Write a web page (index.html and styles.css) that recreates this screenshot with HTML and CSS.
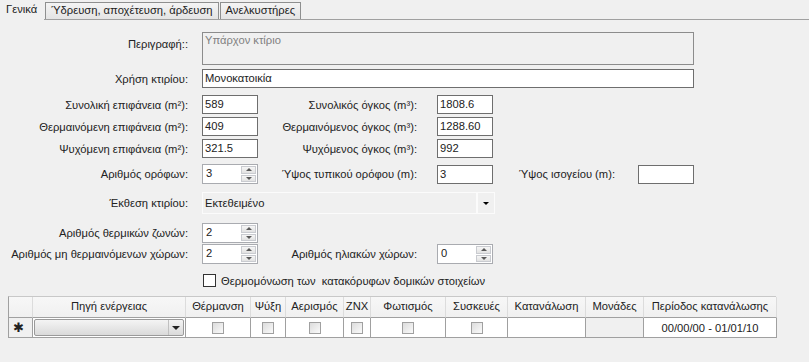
FILE: index.html
```html
<!DOCTYPE html>
<html lang="el">
<head>
  <meta charset="UTF-8">
  <title>Κτίριο - Γενικά</title>
  <link rel="stylesheet" href="styles.css">
</head>
<body>
  <div class="tabs">
    <div class="tab active">Γενικά</div>
    <div class="tab">Ύδρευση, αποχέτευση, άρδευση</div>
    <div class="tab">Ανελκυστήρες</div>
  </div>

  <div class="form">
    <div class="row row-desc">
      <label class="lbl c1 top">Περιγραφή::</label>
      <div class="memo">Υπάρχον κτίριο</div>
    </div>

    <div class="row row-use">
      <label class="lbl c1">Χρήση κτιρίου:</label>
      <div class="box wide">Μονοκατοικία</div>
    </div>

    <div class="row row-num first">
      <label class="lbl c1">Συνολική επιφάνεια (m²):</label>
      <div class="box">589</div>
      <label class="lbl c2">Συνολικός όγκος (m³):</label>
      <div class="box">1808.6</div>
    </div>
    <div class="row row-num">
      <label class="lbl c1">Θερμαινόμενη επιφάνεια (m²):</label>
      <div class="box">409</div>
      <label class="lbl c2">Θερμαινόμενος όγκος (m³):</label>
      <div class="box">1288.60</div>
    </div>
    <div class="row row-num">
      <label class="lbl c1">Ψυχόμενη επιφάνεια (m²):</label>
      <div class="box">321.5</div>
      <label class="lbl c2">Ψυχόμενος όγκος (m³):</label>
      <div class="box">992</div>
    </div>

    <div class="row row-floors">
      <label class="lbl c1">Αριθμός ορόφων:</label>
      <div class="spin"><span class="spin-val">3</span><span class="spin-btns"><i class="up"></i><i class="down"></i></span></div>
      <label class="lbl c2">Ύψος τυπικού ορόφου (m):</label>
      <div class="box">3</div>
      <label class="lbl c3">Ύψος ισογείου (m):</label>
      <div class="box"></div>
    </div>

    <div class="row row-combo">
      <label class="lbl c1">Έκθεση κτιρίου:</label>
      <div class="combo">
        <span class="combo-val">Εκτεθειμένο</span>
        <span class="combo-arrow"></span>
      </div>
    </div>

    <div class="row row-zones">
      <label class="lbl c1">Αριθμός θερμικών ζωνών:</label>
      <div class="spin"><span class="spin-val">2</span><span class="spin-btns"><i class="up"></i><i class="down"></i></span></div>
    </div>
    <div class="row row-unheated">
      <label class="lbl c1">Αριθμός μη θερμαινόμενων χώρων:</label>
      <div class="spin"><span class="spin-val">2</span><span class="spin-btns"><i class="up"></i><i class="down"></i></span></div>
      <label class="lbl c2">Αριθμός ηλιακών χώρων:</label>
      <div class="spin"><span class="spin-val">0</span><span class="spin-btns"><i class="up"></i><i class="down"></i></span></div>
    </div>

    <div class="row row-check">
      <span class="check"></span>
      <span class="check-text">Θερμομόνωση των &nbsp;κατακόρυφων δομικών στοιχείων</span>
    </div>

    <div class="grid">
      <div class="hd rh"></div>
      <div class="hd">Πηγή ενέργειας</div>
      <div class="hd">Θέρμανση</div>
      <div class="hd">Ψύξη</div>
      <div class="hd">Αερισμός</div>
      <div class="hd">ZNX</div>
      <div class="hd">Φωτισμός</div>
      <div class="hd">Συσκευές</div>
      <div class="hd">Κατανάλωση</div>
      <div class="hd">Μονάδες</div>
      <div class="hd">Περίοδος κατανάλωσης</div>

      <div class="cell rh star">✱</div>
      <div class="cell"><div class="cell-combo"><span class="cell-arrow"></span></div></div>
      <div class="cell"><span class="cb"></span></div>
      <div class="cell"><span class="cb"></span></div>
      <div class="cell"><span class="cb"></span></div>
      <div class="cell"><span class="cb"></span></div>
      <div class="cell"><span class="cb"></span></div>
      <div class="cell"><span class="cb"></span></div>
      <div class="cell"></div>
      <div class="cell grey"></div>
      <div class="cell">00/00/00 - 01/01/10</div>
    </div>
  </div>
</body>
</html>
```

FILE: styles.css
```css
* {
  margin: 0;
  padding: 0;
  box-sizing: border-box;
}

body {
  font-family: "Liberation Sans", Arial, sans-serif;
  font-size: 11.2px;
  color: #222;
  background-color: #f0f0f0;
  width: 809px;
  height: 362px;
  overflow: hidden;
}

/* tab strip */
.tabs {
  display: flex;
  align-items: flex-end;
  height: 20px;
  border-bottom: 1px solid #a0a0a0;
}

.tab {
  height: 17px;
  line-height: 15px;
  padding: 0 5px;
  margin-left: 1px;
  border: 1px solid #8e8f8f;
  border-bottom: none;
  background: linear-gradient(#f4f4f4, #e4e4e4);
}

.tab.active {
  width: 44px;
  height: 20px;
  line-height: 18px;
  margin: 0 0 -1px 0;
  padding-left: 6px;
  border: none;
  background: #f0f0f0;
}

/* form rows */
.form {
  padding-top: 12px;
}

.row {
  display: flex;
  align-items: center;
}

.row-desc { height: 33px; align-items: flex-start; }
.row-use { height: 19px; margin-top: 4px; }
.row-num { height: 19px; margin-top: 3px; }
.row-num.first { margin-top: 7px; }
.row-floors { height: 20px; margin-top: 6px; }
.row-combo { height: 22px; margin-top: 8px; }
.row-zones { height: 20px; margin-top: 9px; }
.row-unheated { height: 20px; margin-top: 1px; }
.row-check { height: 13px; margin-top: 10px; padding-left: 203px; }

.lbl {
  text-align: right;
  white-space: nowrap;
}

.lbl.c1 { width: 188px; margin-right: 14px; }
.lbl.c2 { width: 159px; margin-right: 20px; }
.lbl.c3 { width: 122px; margin-right: 23px; }
.lbl.top { padding-top: 6px; }

.memo {
  width: 492px;
  height: 33px;
  border: 1px solid #8c8c8c;
  padding: 1px 2px;
  color: #808080;
}

.box {
  width: 56px;
  height: 19px;
  border: 1px solid #6e6e6e;
  background: #fff;
  padding: 0 2px;
  line-height: 16px;
}

.box.wide {
  width: 492px;
}

/* numeric up/down */
.spin {
  width: 56px;
  height: 20px;
  border: 1px solid #a9abb0;
  background: #fff;
  display: flex;
  justify-content: space-between;
  padding: 1px;
}

.spin-val {
  padding-left: 2px;
  line-height: 15px;
}

.spin-btns {
  width: 15px;
  display: flex;
  flex-direction: column;
  gap: 1px;
}

.spin-btns i {
  flex: 1;
  border: 1px solid #c9cbd0;
  background: linear-gradient(#f6f6f6, #e2e2e2);
  display: flex;
  justify-content: center;
  align-items: center;
}

.spin-btns i::after {
  content: "";
  border-left: 3px solid transparent;
  border-right: 3px solid transparent;
}

.spin-btns .up::after { border-bottom: 3px solid #5a5a5a; }
.spin-btns .down::after { border-top: 3px solid #5a5a5a; }

/* flat combo */
.combo {
  width: 293px;
  height: 22px;
  border: 1px solid #fbfbfb;
  display: flex;
  align-items: center;
}

.combo-val {
  flex: 1;
  padding-left: 2px;
}

.combo-arrow {
  width: 18px;
  height: 20px;
  border-left: 2px solid #fbfbfb;
  display: flex;
  justify-content: center;
  align-items: center;
}

.combo-arrow::after {
  content: "";
  border-left: 3px solid transparent;
  border-right: 3px solid transparent;
  border-top: 3px solid #000;
}

/* checkbox */
.check {
  width: 13px;
  height: 13px;
  border: 1px solid #333;
  background: #fff;
  margin-right: 5px;
}

/* data grid */
.grid {
  display: grid;
  grid-template-columns: 24px 153px 65px 35px 58px 27px 75px 62px 78px 58px 133px;
  grid-template-rows: 21px 20px;
  width: 768px;
  margin: 9px 0 0 8px;
  border-left: 1px solid #a0a0a0;
  border-top: 1px solid #c8c8c8;
}

.hd {
  border-right: 1px solid #dcdcdc;
  border-bottom: 1px solid #a0a0a0;
  background: linear-gradient(#f7f7f7, #f0f0f0);
  text-align: center;
  line-height: 19px;
  white-space: nowrap;
  overflow: hidden;
}

.cell {
  border-right: 1px solid #a0a0a0;
  border-bottom: 1px solid #a0a0a0;
  background: #fff;
  display: flex;
  justify-content: center;
  align-items: center;
}

.cell.grey,
.cell.rh {
  background: #f0f0f0;
}

.star {
  font-size: 13px;
  justify-content: flex-start;
  padding-left: 4px;
}

.cb {
  width: 12px;
  height: 12px;
  border: 1px solid #a0a0a0;
  background: linear-gradient(135deg, #dcdcdc, #fafafa);
}

.cell-combo {
  width: 150px;
  height: 17px;
  border: 1px solid #9a9a9a;
  border-radius: 2px;
  background: linear-gradient(#f4f4f4, #dadada);
  display: flex;
  justify-content: flex-end;
}

.cell-arrow {
  width: 15px;
  border-left: 1px solid #c0c0c0;
  display: flex;
  justify-content: center;
  align-items: center;
}

.cell-arrow::after {
  content: "";
  border-left: 4px solid transparent;
  border-right: 4px solid transparent;
  border-top: 4px solid #222;
}
```
